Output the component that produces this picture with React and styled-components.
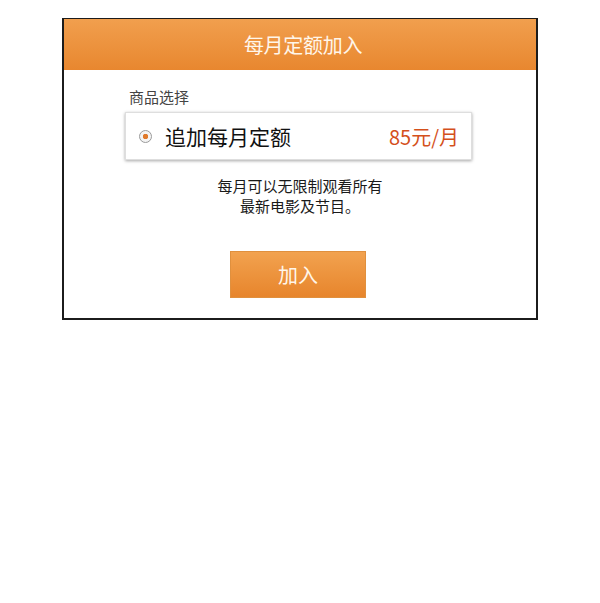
import React from 'react';
import styled, { createGlobalStyle } from 'styled-components';

const GlobalStyle = createGlobalStyle`
	body {
		margin: 0;
		background: #ffffff;
		font-family: "Noto Sans CJK SC", "Noto Sans", sans-serif;
	}
`;

export default function App() {
	return (
		<>
			<GlobalStyle />
			<Page>
				<Dialog>
					<Header>每月定额加入</Header>
					<Body>
						<Label>商品选择</Label>
						<Option>
							<Radio checked />
							<OptionName>追加每月定额</OptionName>
							<Price>85元/月</Price>
						</Option>
						<Description>
							每月可以无限制观看所有
							<br />
							最新电影及节目。
						</Description>
						<JoinButton>加入</JoinButton>
					</Body>
				</Dialog>
			</Page>
		</>
	);
}

const Page = styled.div`
	padding: 18px 0 0 62px;
`;

const Dialog = styled.div`
	width: 476px;
	height: 302px;
	box-sizing: border-box;
	border: 2px solid #1c1c1c;
	border-top-width: 1px;
	display: flex;
	flex-direction: column;
`;

const Header = styled.div`
	height: 51px;
	display: flex;
	align-items: center;
	justify-content: center;
	padding-left: 6px;
	background: linear-gradient(to bottom, #f19f4e, #e8872f);
	color: #fff6ea;
	font-size: 20px;
	letter-spacing: -0.3px;
`;

const Body = styled.div`
	display: flex;
	flex-direction: column;
	padding: 16px 0 0 0;
`;

const Label = styled.div`
	margin-left: 65px;
	font-size: 15px;
	line-height: 22px;
	color: #444;
`;

const Option = styled.div`
	margin: 4px 0 0 61px;
	width: 347px;
	height: 48px;
	box-sizing: border-box;
	border: 1px solid #dedede;
	box-shadow: 0 1px 3px rgba(0, 0, 0, 0.35);
	display: flex;
	align-items: center;
	padding: 0 12px 0 13px;
`;

const Radio = styled.span`
	width: 13px;
	height: 13px;
	box-sizing: border-box;
	border-radius: 50%;
	border: 1px solid #9a9a9a;
	background: radial-gradient(circle, #e07a2c 0 2.5px, #f4f4f4 3px);
	flex-shrink: 0;
`;

const OptionName = styled.span`
	margin-left: 13px;
	font-size: 21px;
	color: #111;
	flex: 1;
`;

const Price = styled.span`
	font-size: 20px;
	color: #d4501c;
`;

const Description = styled.div`
	margin-top: 16px;
	text-align: center;
	font-size: 15px;
	line-height: 20px;
	color: #1a1a1a;
`;

const JoinButton = styled.button`
	align-self: center;
	margin: 35px 0 0 -4px;
	width: 136px;
	height: 47px;
	border: 1px solid #e0903e;
	background: linear-gradient(to bottom, #f2a24f, #e7852c);
	color: #fff6ea;
	font-family: inherit;
	font-size: 20px;
	cursor: pointer;
`;
